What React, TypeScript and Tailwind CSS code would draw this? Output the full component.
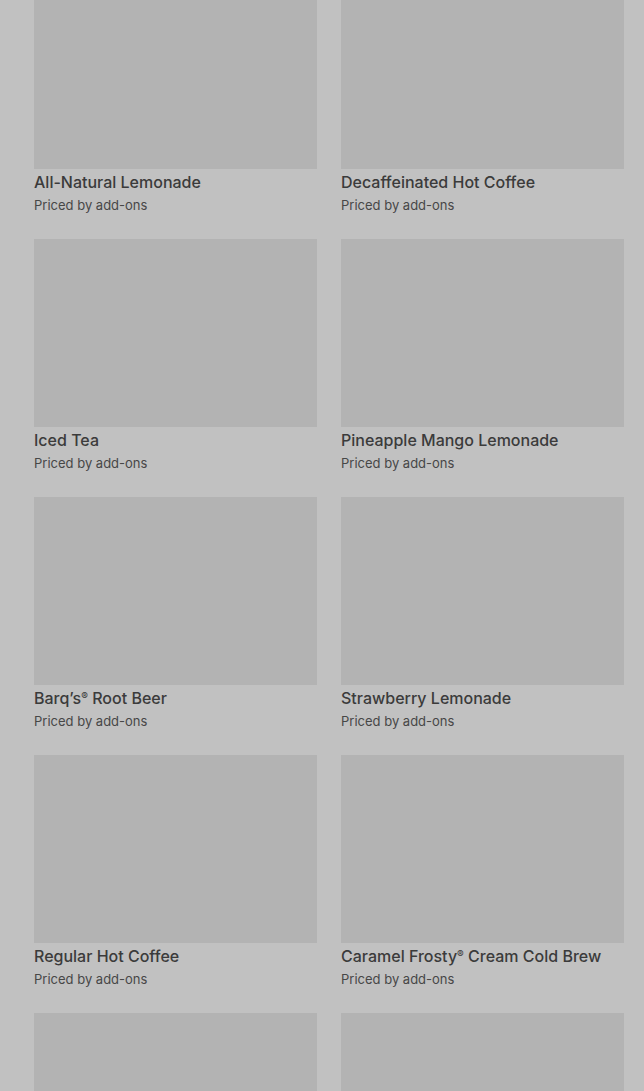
import React from "react";

const items = [
  "All-Natural Lemonade",
  "Decaffeinated Hot Coffee",
  "Iced Tea",
  "Pineapple Mango Lemonade",
  "Barq’s® Root Beer",
  "Strawberry Lemonade",
  "Regular Hot Coffee",
  "Caramel Frosty® Cream Cold Brew",
  "",
  "",
];

function Title({ text }: { text: string }) {
  const parts = text.split("®");
  return (
    <>
      {parts.map((p, i) => (
        <React.Fragment key={i}>
          {p}
          {i < parts.length - 1 && (
            <span className="relative -top-[4px] text-[10px] leading-none">®</span>
          )}
        </React.Fragment>
      ))}
    </>
  );
}

export default function App() {
  return (
    <div
      className="h-[1091px] overflow-hidden bg-[#c1c1c1]"
      style={{ fontFamily: "Inter, 'Noto Sans', sans-serif" }}
    >
      <div className="-mt-[19px] grid grid-cols-2 gap-x-6 pl-[34px] pr-[20px]">
        {items.map((name, i) => (
          <div key={i} className="flex flex-col pb-[24px]">
            <div className="h-[188px] w-full bg-[#b3b3b3]" />
            <div className="mt-[3px] h-[20px] text-[16px] font-medium leading-[20px] text-[#3b3b3b]">
              <Title text={name} />
            </div>
            <div className="mt-[3px] h-[20px] text-[13px] leading-[20px] text-[#474747]">
              {name ? "Priced by add-ons" : ""}
            </div>
          </div>
        ))}
      </div>
    </div>
  );
}
